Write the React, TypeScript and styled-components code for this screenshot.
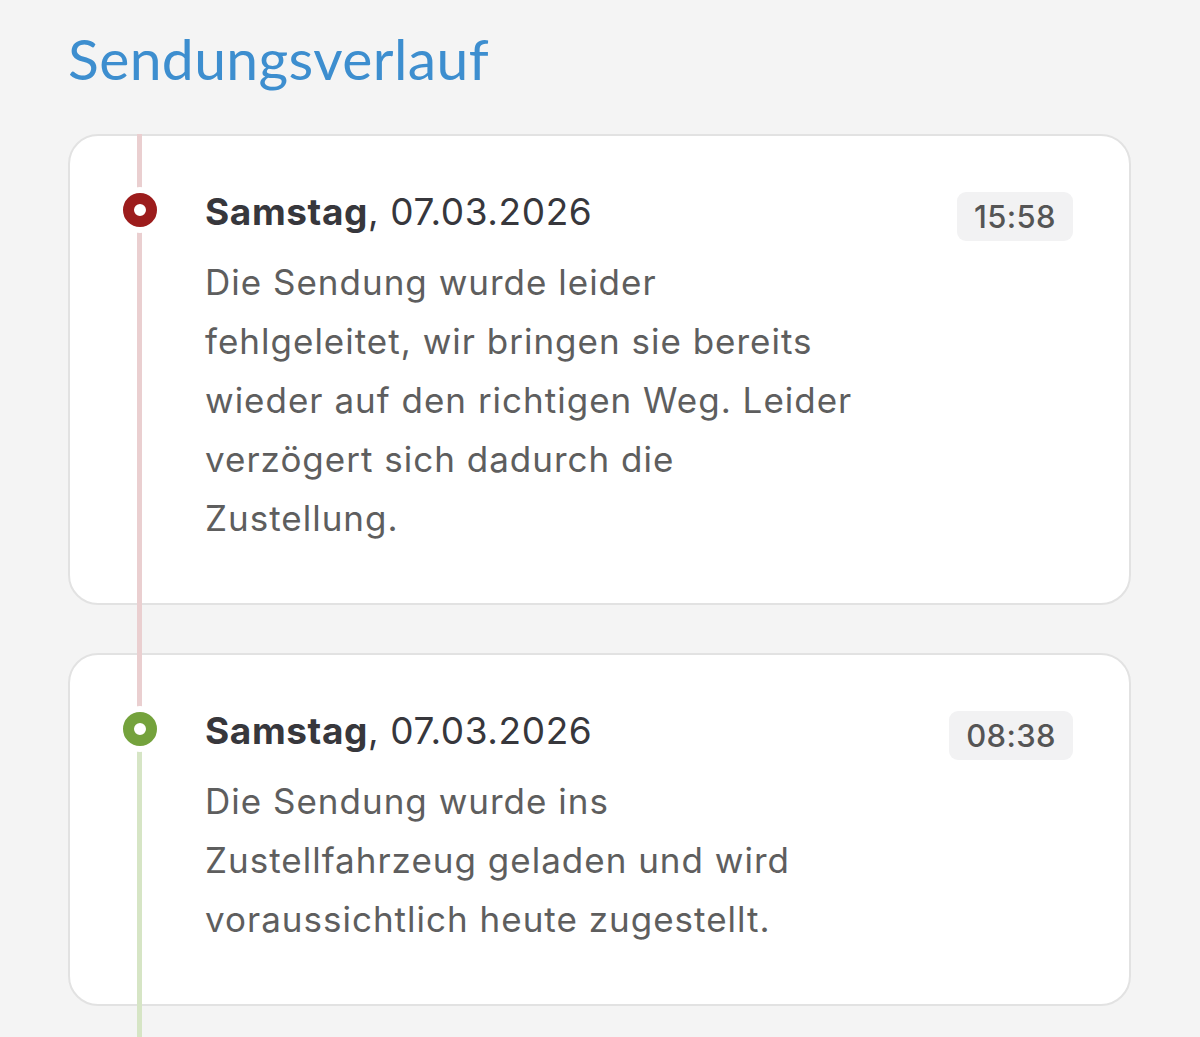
import React from 'react';
import styled, { createGlobalStyle } from 'styled-components';

const GlobalStyle = createGlobalStyle`
  html, body {
    margin: 0;
    padding: 0;
    background: #f4f4f4;
    overflow: hidden;
  }
`;

const Page = styled.main`
  box-sizing: border-box;
  width: 1200px;
  height: 1037px;
  padding: 26px 69px 0 68px;
  background: #f4f4f4;
  font-family: 'Inter', 'Lato', sans-serif;
  overflow: hidden;
`;

const Title = styled.h1`
  margin: 0 0 44px 0;
  font-family: 'Lato', sans-serif;
  font-size: 57px;
  line-height: 64px;
  font-weight: 400;
  color: #3d8ecf;
  letter-spacing: 0.4px;
`;

const Timeline = styled.ol`
  list-style: none;
  margin: 0;
  padding: 0;
  display: flex;
  flex-direction: column;
  gap: 48px;
`;

// rail segment runs from this entry's dot down to the next entry's dot
const Entry = styled.li<{ $rail: string; $first?: boolean; $last?: boolean }>`
  position: relative;

  &::before {
    content: '';
    position: absolute;
    left: 69px;
    width: 5px;
    top: ${p => (p.$first ? '0' : '76px')};
    bottom: ${p => (p.$last ? '-40px' : '-125px')};
    background: ${p => p.$rail};
    z-index: 1;
  }
`;

const Marker = styled.span<{ $color: string }>`
  position: absolute;
  left: 55px;
  top: 59px;
  width: 12px;
  height: 12px;
  border-radius: 50%;
  background: #fff;
  border: 11px solid ${p => p.$color};
  box-shadow: 0 0 0 6px #fff;
  z-index: 2;
`;

const Card = styled.div`
  box-sizing: border-box;
  background: #fff;
  border: 2px solid #e2e2e2;
  border-radius: 30px;
  padding: 56px 56px 55px 135px;
  display: grid;
  grid-template-columns: 1fr auto;
  column-gap: 24px;
`;

const DateLine = styled.div`
  grid-column: 1;
  font-size: 37px;
  line-height: 40px;
  color: #37373c;
  letter-spacing: 0.6px;

  b {
    font-weight: 700;
  }
`;

const Message = styled.p`
  grid-column: 1;
  margin: 21px 0 0 0;
  font-size: 35px;
  line-height: 59px;
  color: #5e5e5e;
  letter-spacing: 1px;
`;

const TimeBadge = styled.span`
  grid-column: 2;
  grid-row: 1 / span 2;
  align-self: start;
  margin-top: 0;
  height: 49px;
  line-height: 49px;
  padding: 0 17px;
  border-radius: 9px;
  background: #f2f2f3;
  color: #555;
  font-size: 31px;
  font-weight: 500;
  letter-spacing: 0.4px;
`;

interface Event {
  day: string;
  date: string;
  time: string;
  lines: string[];
  color: string;
  rail: string;
}

const events: Event[] = [
  {
    day: 'Samstag',
    date: '07.03.2026',
    time: '15:58',
    lines: [
      'Die Sendung wurde leider',
      'fehlgeleitet, wir bringen sie bereits',
      'wieder auf den richtigen Weg. Leider',
      'verzögert sich dadurch die',
      'Zustellung.',
    ],
    color: '#9c1c1c',
    rail: '#eacfd0',
  },
  {
    day: 'Samstag',
    date: '07.03.2026',
    time: '08:38',
    lines: [
      'Die Sendung wurde ins',
      'Zustellfahrzeug geladen und wird',
      'voraussichtlich heute zugestellt.',
    ],
    color: '#74a23c',
    rail: '#d6e5c5',
  },
];

const App: React.FC = () => {
  return (
    <Page>
      <GlobalStyle />
      <Title>Sendungsverlauf</Title>
      <Timeline>
        {events.map((ev, i) => (
          <Entry key={i} $rail={ev.rail} $first={i === 0} $last={i === events.length - 1}>
            <Marker $color={ev.color} />
            <Card>
              <DateLine>
                <b>{ev.day}</b>, {ev.date}
              </DateLine>
              <TimeBadge>{ev.time}</TimeBadge>
              <Message>
                {ev.lines.map((line, j) => (
                  <React.Fragment key={j}>
                    {line}
                    {j < ev.lines.length - 1 && <br />}
                  </React.Fragment>
                ))}
              </Message>
            </Card>
          </Entry>
        ))}
      </Timeline>
    </Page>
  );
};

export default App;
